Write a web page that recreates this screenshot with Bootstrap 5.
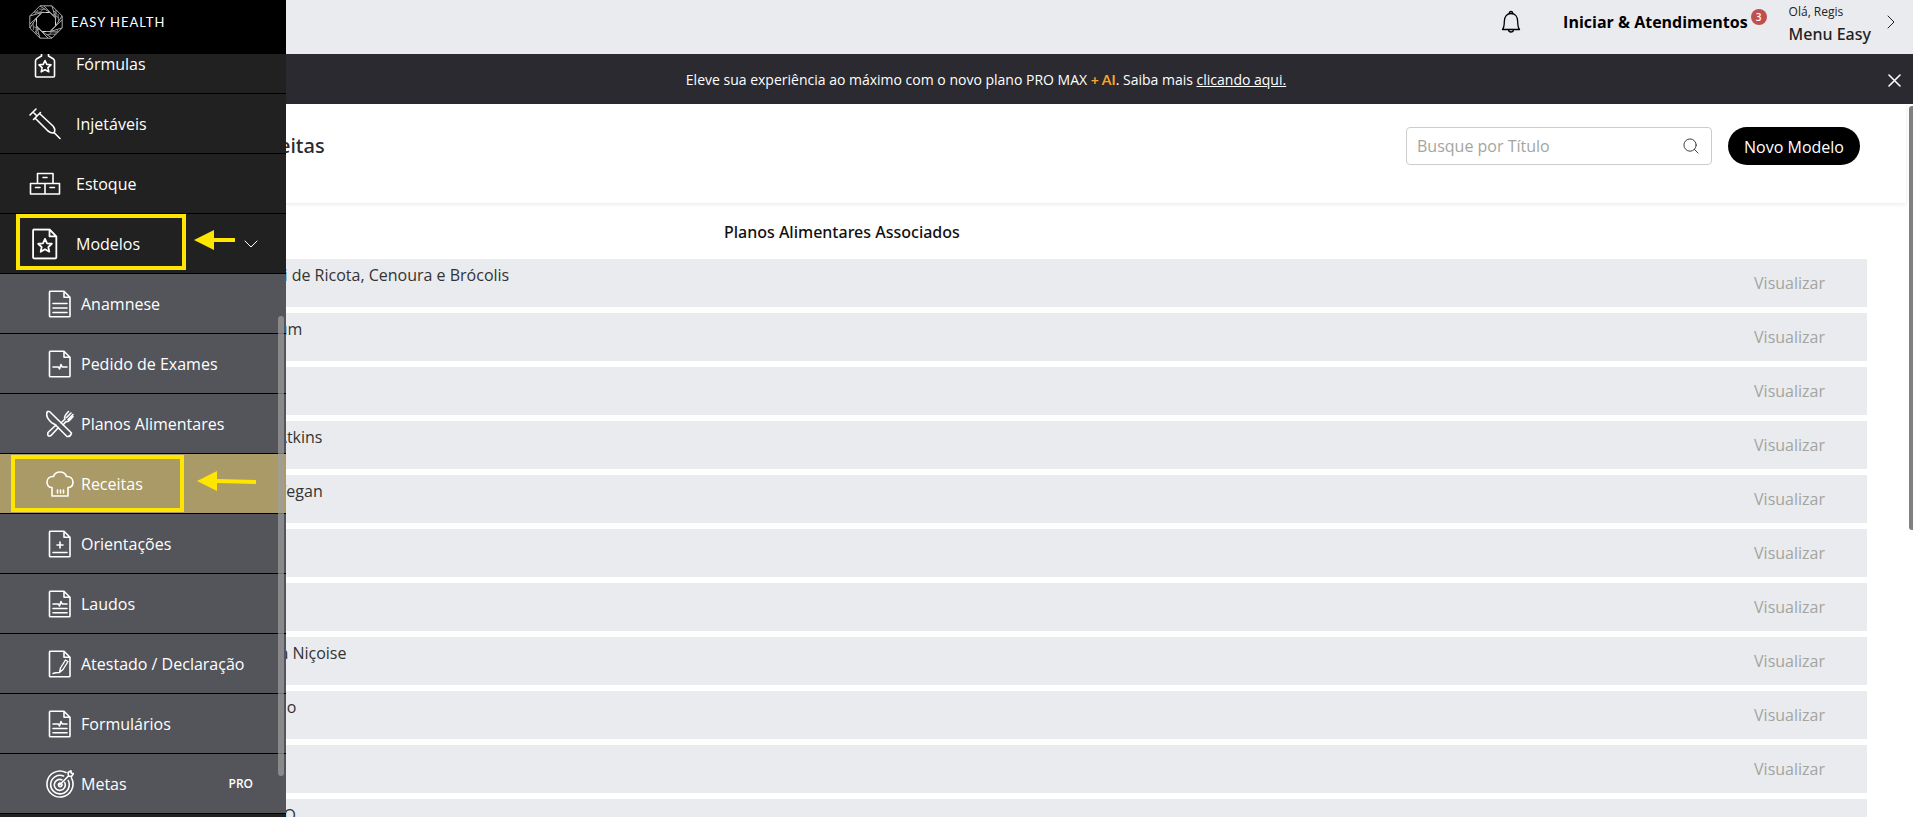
<!DOCTYPE html>
<html lang="pt-BR">
<head>
<meta charset="utf-8">
<meta name="viewport" content="width=device-width, initial-scale=1">
<title>Easy Health - Receitas</title>
<link href="https://cdn.jsdelivr.net/npm/bootstrap@5.3.0/dist/css/bootstrap.min.css" rel="stylesheet">
<style>
:root{--medium:"Noto Sans","Open Sans",sans-serif}
body{font-family:"Open Sans","Noto Sans",sans-serif;font-size:16px;line-height:24px;color:#333;background:#fff}
svg{display:block;flex:none}
.line-art{fill:none;stroke:currentColor;stroke-width:1.6;stroke-linejoin:round;stroke-linecap:round}
.thin{stroke-width:1}
.medium{font-family:var(--medium);font-weight:500}

/* top bar */
.topbar{height:54px;background:#eaebef;color:#000;padding:0 18px 10px 0}
.start-link{color:#000;font-weight:700;text-decoration:none}
.count{width:16px;height:16px;background:#bf504d;color:#fff;font-size:10px;line-height:16px;font-weight:600;margin:-10px 0 0 3px}
.user-menu{color:#222;text-decoration:none;margin-left:22px;padding-top:4px}
.hello{font-size:12px;line-height:16px}
.bell{margin-right:42px}

/* notice */
.notice{height:50px;background:#2a2a30;color:#fff;font-size:14px;line-height:20px;padding:2px 12px 0 84px}
.notice a{color:#fff}
.ai{color:#f9a52b;font-family:Lato,sans-serif;font-weight:700}
.plain-btn{background:none;border:0;padding:0;color:inherit}

/* side menu */
.side{width:286px;background:#212121;color:#fff;z-index:10}
.brand-bar{height:54px;background:#000;padding:0 0 10px 29px;gap:8px;color:#fff;text-decoration:none}
.brand-name{font-family:Lato,sans-serif;font-size:13px;letter-spacing:1px;line-height:20px}
.menu-list{margin-top:-20px}
.menu-list a{height:60px;border-bottom:1px solid #000;color:#fff;text-decoration:none;padding:0 28px;gap:14px}
.menu-list .sub{background:#54555b;padding-left:46px;gap:7px}
.menu-list .sub.current{background:#a99a68}
.menu-list .tag{font-size:12px;font-weight:600;margin-right:5px}
.side-thumb{right:2px;top:316px;bottom:41px;width:6px;border-radius:3px;background:rgba(160,160,160,.7)}
.frame{border:4px solid #ffe600}
.frame-a{left:16px;top:0;width:170px;height:56px}
.frame-b{left:11px;top:1px;width:173px;height:57px}
.arrow-a{left:194px;top:16px}
.arrow-b{left:197px;top:17px}

/* content */
.toolbar{height:99px;padding:23px 46px 0 245px;gap:16px;margin-right:7px;box-shadow:0 1px 4px rgba(0,0,0,.1)}
.toolbar h1{font-size:20px;line-height:38px;color:#2a2a30}
.search{width:306px;height:38px;border:1px solid #ccc;border-radius:4px;padding:0 12px 0 10px}
.search input{border:0;outline:0;background:none;min-width:0;padding:0}
.search input::placeholder{color:#a3a59f;opacity:1}
.btn-new{background:#000;color:#fff;height:38px;width:132px;border-radius:19px;border:0;padding:2px 0 0}
.list-area{padding:0 46px 0 227px}
.recipes{border-collapse:separate;border-spacing:0 6px;table-layout:fixed}
.recipes th{height:44px;padding:2px 0 0;color:#111}
.recipes td{height:48px;background:#eaebef;padding:0}
.recipes .c-name{width:30.3%;padding:4px 12px 0;vertical-align:top}
.recipes .c-act{width:160px;padding-right:42px;text-align:right}
.recipes button{color:#a3a59f}
.page-thumb{right:0;top:106px;width:4px;height:424px;background:#808080;border-radius:3px 0 0 3px}
</style>
</head>
<body class="vh-100 overflow-hidden position-relative">

<svg width="0" height="0" class="position-absolute" aria-hidden="true">
  <symbol id="sheet" viewBox="0 0 28 28"><path d="M4 1.2H18L24 7.200V26Q24 26.800 23 26.800H4.500Q3.500 26.800 3.500 26V2Q3.500 1.200 4.500 1.200M18 1.500V7.200H24"/></symbol>
  <symbol id="star" viewBox="0 0 28 28"><path d="M14 9.500 15.800 13.400 20 13.800 16.900 16.700 17.800 20.800 14 18.700 10.200 20.800 11.100 16.700 8 13.800 12.200 13.400Z"/></symbol>
  <symbol id="pulse" viewBox="0 0 28 28"><path d="M7 14H12.500L13.500 16 15 11.500 16.200 14H21"/></symbol>
</svg>

<header class="topbar d-flex align-items-center justify-content-end">
  <button class="plain-btn bell" aria-label="Notificações" type="button">
    <svg width="20" height="24" viewBox="0 0 20 24" class="line-art"><path stroke-width="1.300" d="M1.500 19.500H18.500C17 17.500 16.700 15.500 16.700 11.500C16.700 6.500 14 3.500 10 3.500S3.300 6.500 3.300 11.500C3.300 15.500 3 17.500 1.500 19.500ZM8.300 3.500Q8.300 1.500 10 1.500T11.700 3.500M7.500 19.800Q7.800 22 10 22T12.500 19.800"/></svg>
  </button>
  <a href="#" class="start-link">Iniciar &amp; Atendimentos</a>
  <span class="count rounded-circle text-center">3</span>
  <a href="#" class="user-menu d-flex align-items-center">
    <span class="d-flex flex-column gap-1"><span class="hello">Olá, Regis</span><span class="medium lh-sm">Menu Easy</span></span>
    <svg width="8" height="14" viewBox="0 0 8 14" class="line-art thin ms-3 mb-1"><path d="M1 1 7 7 1 13"/></svg>
  </a>
</header>

<div class="notice d-flex align-items-center">
  <div class="flex-grow-1 text-center">Eleve sua experiência ao máximo com o novo plano PRO MAX <span class="ai">+ AI</span>. Saiba mais <a href="#">clicando aqui.</a></div>
  <button class="plain-btn" aria-label="Fechar" type="button"><svg width="13" height="13" viewBox="0 0 13 13" class="line-art"><path d="M1 1 12 12M12 1 1 12"/></svg></button>
</div>

<main>
  <div class="toolbar d-flex align-items-start">
    <h1 class="medium m-0 me-auto">Receitas</h1>
    <div class="search d-flex align-items-center">
      <input class="flex-grow-1" type="text" placeholder="Busque por Título" aria-label="Busque por Título">
      <svg width="16" height="16" viewBox="0 0 17 17" class="line-art thin"><circle cx="7.500" cy="7.500" r="6.500"/><path d="M12 12 16 16"/></svg>
    </div>
    <button class="btn-new" type="button">Novo Modelo</button>
  </div>

  <div class="list-area">
    <table class="recipes w-100">
      <thead><tr><th class="c-name"></th><th class="medium">Planos Alimentares Associados</th><th class="c-act"></th></tr></thead>
      <tbody>
        <tr><td class="c-name">Ravioli de Ricota, Cenoura e Brócolis</td><td></td><td class="c-act"><button class="plain-btn" type="button">Visualizar</button></td></tr>
        <tr><td class="c-name">Jerimum</td><td></td><td class="c-act"><button class="plain-btn" type="button">Visualizar</button></td></tr>
        <tr><td class="c-name"></td><td></td><td class="c-act"><button class="plain-btn" type="button">Visualizar</button></td></tr>
        <tr><td class="c-name">Bolo Atkins</td><td></td><td class="c-act"><button class="plain-btn" type="button">Visualizar</button></td></tr>
        <tr><td class="c-name">Bolo Vegan</td><td></td><td class="c-act"><button class="plain-btn" type="button">Visualizar</button></td></tr>
        <tr><td class="c-name"></td><td></td><td class="c-act"><button class="plain-btn" type="button">Visualizar</button></td></tr>
        <tr><td class="c-name"></td><td></td><td class="c-act"><button class="plain-btn" type="button">Visualizar</button></td></tr>
        <tr><td class="c-name">Salada Niçoise</td><td></td><td class="c-act"><button class="plain-btn" type="button">Visualizar</button></td></tr>
        <tr><td class="c-name">Bolinho</td><td></td><td class="c-act"><button class="plain-btn" type="button">Visualizar</button></td></tr>
        <tr><td class="c-name"></td><td></td><td class="c-act"><button class="plain-btn" type="button">Visualizar</button></td></tr>
        <tr><td class="c-name">RISOTO</td><td></td><td class="c-act"><button class="plain-btn" type="button">Visualizar</button></td></tr>
      </tbody>
    </table>
  </div>
</main>
<div class="page-thumb position-absolute"></div>

<aside class="side position-absolute top-0 start-0 vh-100 d-flex flex-column">
  <a href="#" class="brand-bar d-flex align-items-center flex-shrink-0">
    <svg width="34" height="34" viewBox="0 0 34 34" fill="none" stroke="#aaa" stroke-width="1">
      <path d="M11 .8H23L33.200 11V23L23 33.200H11L.8 23V11Z"/>
      <path d="M13 7.500H21L26.500 13V21L21 26.500H13L7.500 21V13Z" stroke="#ddd"/>
      <path d="M11 1 21 7.500M15 1 25 11.500M23 1 26.500 13M27 5 26.500 17M33 11 26.500 21M33 15 22 25.500M33 23 21 26.500M29 27 17 26.500M23 33 13 26.500M19 33 8 22M11 33 7.500 21M7 29 7.500 17M1 23 7.500 13M1 19 12 8.500M1 11 13 7.500M5 7 17 7.500"/>
      <path d="M10 4 17 4.500M29 9 29.500 16M25 29 18 29.500M4.500 25 4 18M24 5 28 9M6 9 9 5M6 26 10 30M29 25 25 30M10 9 14 4M24 9 30 13M24 25 20 30M10 25 4 21" stroke="#888"/>
    </svg>
    <span class="brand-name">EASY HEALTH</span>
  </a>
  <nav class="overflow-hidden flex-grow-1">
    <div class="menu-list d-flex flex-column">
      <a href="#" class="d-flex align-items-center">
        <svg width="34" height="34" viewBox="-3 -3 34 34" class="line-art"><path d="M9 3H19M10.500 3V6L5.500 9Q4.500 10 4.500 11V26Q4.500 27 5.500 27H22.500Q23.500 27 23.500 26V11Q23.500 10 22.500 9L17.500 6V3"/><use href="#star" y="1" width="28" height="28"/></svg>Fórmulas</a>
      <a href="#" class="d-flex align-items-center">
        <svg width="34" height="34" viewBox="0 0 34 34" class="line-art"><path d="M2 8 8 2M5 5 8.500 8.500M5.500 12.500 12.500 5.500M7 11 20 24Q24 27 26 25.500Q28 23 25 19L11.500 6.500M26 25.500 32 31.500M10 8 7.500 10.500"/></svg>Injetáveis</a>
      <a href="#" class="d-flex align-items-center">
        <svg width="34" height="34" viewBox="0 0 34 34" class="line-art"><path d="M9.500 16V6.500H25V16M2.500 16.500H17V27H2.500ZM17 16.500H31.500V27H17M15 10.500H19M7.500 20.500H12M22 20.500H26.500"/></svg>Estoque</a>
      <a href="#" class="d-flex align-items-center position-relative">
        <svg width="34" height="34" viewBox="-1 -1 30 30" class="line-art"><use href="#sheet" width="28" height="28"/><use href="#star" width="28" height="28"/></svg>Modelos
        <svg width="14" height="8" viewBox="0 0 14 8" class="line-art thin ms-auto"><path d="M1 1 7 7 13 1"/></svg>
        <span class="frame frame-a position-absolute"></span>
        <svg class="arrow-a position-absolute" width="42" height="20" viewBox="0 0 42 20" fill="#ffe600"><path d="M0 10 20 0V8H41V12H20V20Z"/></svg>
      </a>
      <a href="#" class="sub d-flex align-items-center">
        <svg width="28" height="28" viewBox="0 0 28 28" class="line-art"><use href="#sheet" width="28" height="28"/><path d="M7 13.500H21M7 18H21M7 22.500H21"/></svg>Anamnese</a>
      <a href="#" class="sub d-flex align-items-center">
        <svg width="28" height="28" viewBox="0 0 28 28" class="line-art"><use href="#sheet" width="28" height="28"/><use href="#pulse" y="3" width="28" height="28"/></svg>Pedido de Exames</a>
      <a href="#" class="sub d-flex align-items-center">
        <svg width="28" height="28" viewBox="0 0 28 28" class="line-art"><path d="M1.500 1.500C-.5 5 2 9.500 6 13L9 14.500 21 26.500Q24.500 27 25.500 23L3.500 1.500ZM12.500 17.500 5 25.500Q1 27.500 2 22.500L10 15M15 13 19 9C17.500 7 19 5 22.500 1.500M17 15 20 11.500C22 12.500 24 10 27 6.500M20.500 7.500 25 3M22 9.500 27 4.500"/></svg>Planos Alimentares</a>
      <a href="#" class="sub current d-flex align-items-center position-relative">
        <svg width="28" height="28" viewBox="0 0 28 28" class="line-art"><path d="M6 26V17.500C2.500 17.500 1 15 1 12C1 8.500 4 6 7.500 6.500C8.500 3.500 11 2 14 2S19.500 3.500 20.500 6.500C24 6 27 8.500 27 12C27 15 25.500 17.500 22 17.500V26ZM11.500 20V23M14.500 20V23M17.500 20V23"/></svg>Receitas
        <span class="frame frame-b position-absolute"></span>
        <svg class="arrow-b position-absolute" width="60" height="20" viewBox="0 0 60 20" fill="#ffe600"><path d="M0 10 20 0V8L59 9V13L20 12V20Z"/></svg>
      </a>
      <a href="#" class="sub d-flex align-items-center">
        <svg width="28" height="28" viewBox="0 0 28 28" class="line-art"><use href="#sheet" width="28" height="28"/><path d="M14 12V18M11 15H17M7 22.500H21"/></svg>Orientações</a>
      <a href="#" class="sub d-flex align-items-center">
        <svg width="28" height="28" viewBox="0 0 28 28" class="line-art"><use href="#sheet" width="28" height="28"/><use href="#pulse" width="28" height="28"/><path d="M7 18.500H21M7 22.800H21"/></svg>Laudos</a>
      <a href="#" class="sub d-flex align-items-center">
        <svg width="28" height="28" viewBox="0 0 28 28" class="line-art"><use href="#sheet" width="28" height="28"/><path stroke-width="1.400" d="M13.500 22.500 14.500 18 19.500 10 22 11.500 17 19.500ZM7 23.500Q9 22.500 13.500 22.500"/></svg>Atestado / Declaração</a>
      <a href="#" class="sub d-flex align-items-center">
        <svg width="28" height="28" viewBox="0 0 28 28" class="line-art"><use href="#sheet" width="28" height="28"/><use href="#pulse" width="28" height="28"/><path d="M7 18.500H21M7 22.800H21"/></svg>Formulários</a>
      <a href="#" class="sub d-flex align-items-center">
        <svg width="28" height="28" viewBox="0 0 28 28" class="line-art"><path d="M20 2.500A13 13 0 1 0 25.500 8M17.500 6A9.300 9.300 0 1 0 22.300 10.500M15.800 9.800A5.500 5.500 0 1 0 18.700 12.500M15 13.200A1.800 1.800 0 1 0 15.800 14M14 14.500 22.500 6M22.500 6 22 2.500 25 .8 25.300 3.200 27.500 3.500 25.500 6.500Z"/></svg>Metas
        <span class="tag ms-auto">PRO</span></a>
    </div>
  </nav>
  <div class="side-thumb position-absolute"></div>
</aside>
<script src="https://cdn.jsdelivr.net/npm/bootstrap@5.3.0/dist/js/bootstrap.bundle.min.js"></script>
</body>
</html>
